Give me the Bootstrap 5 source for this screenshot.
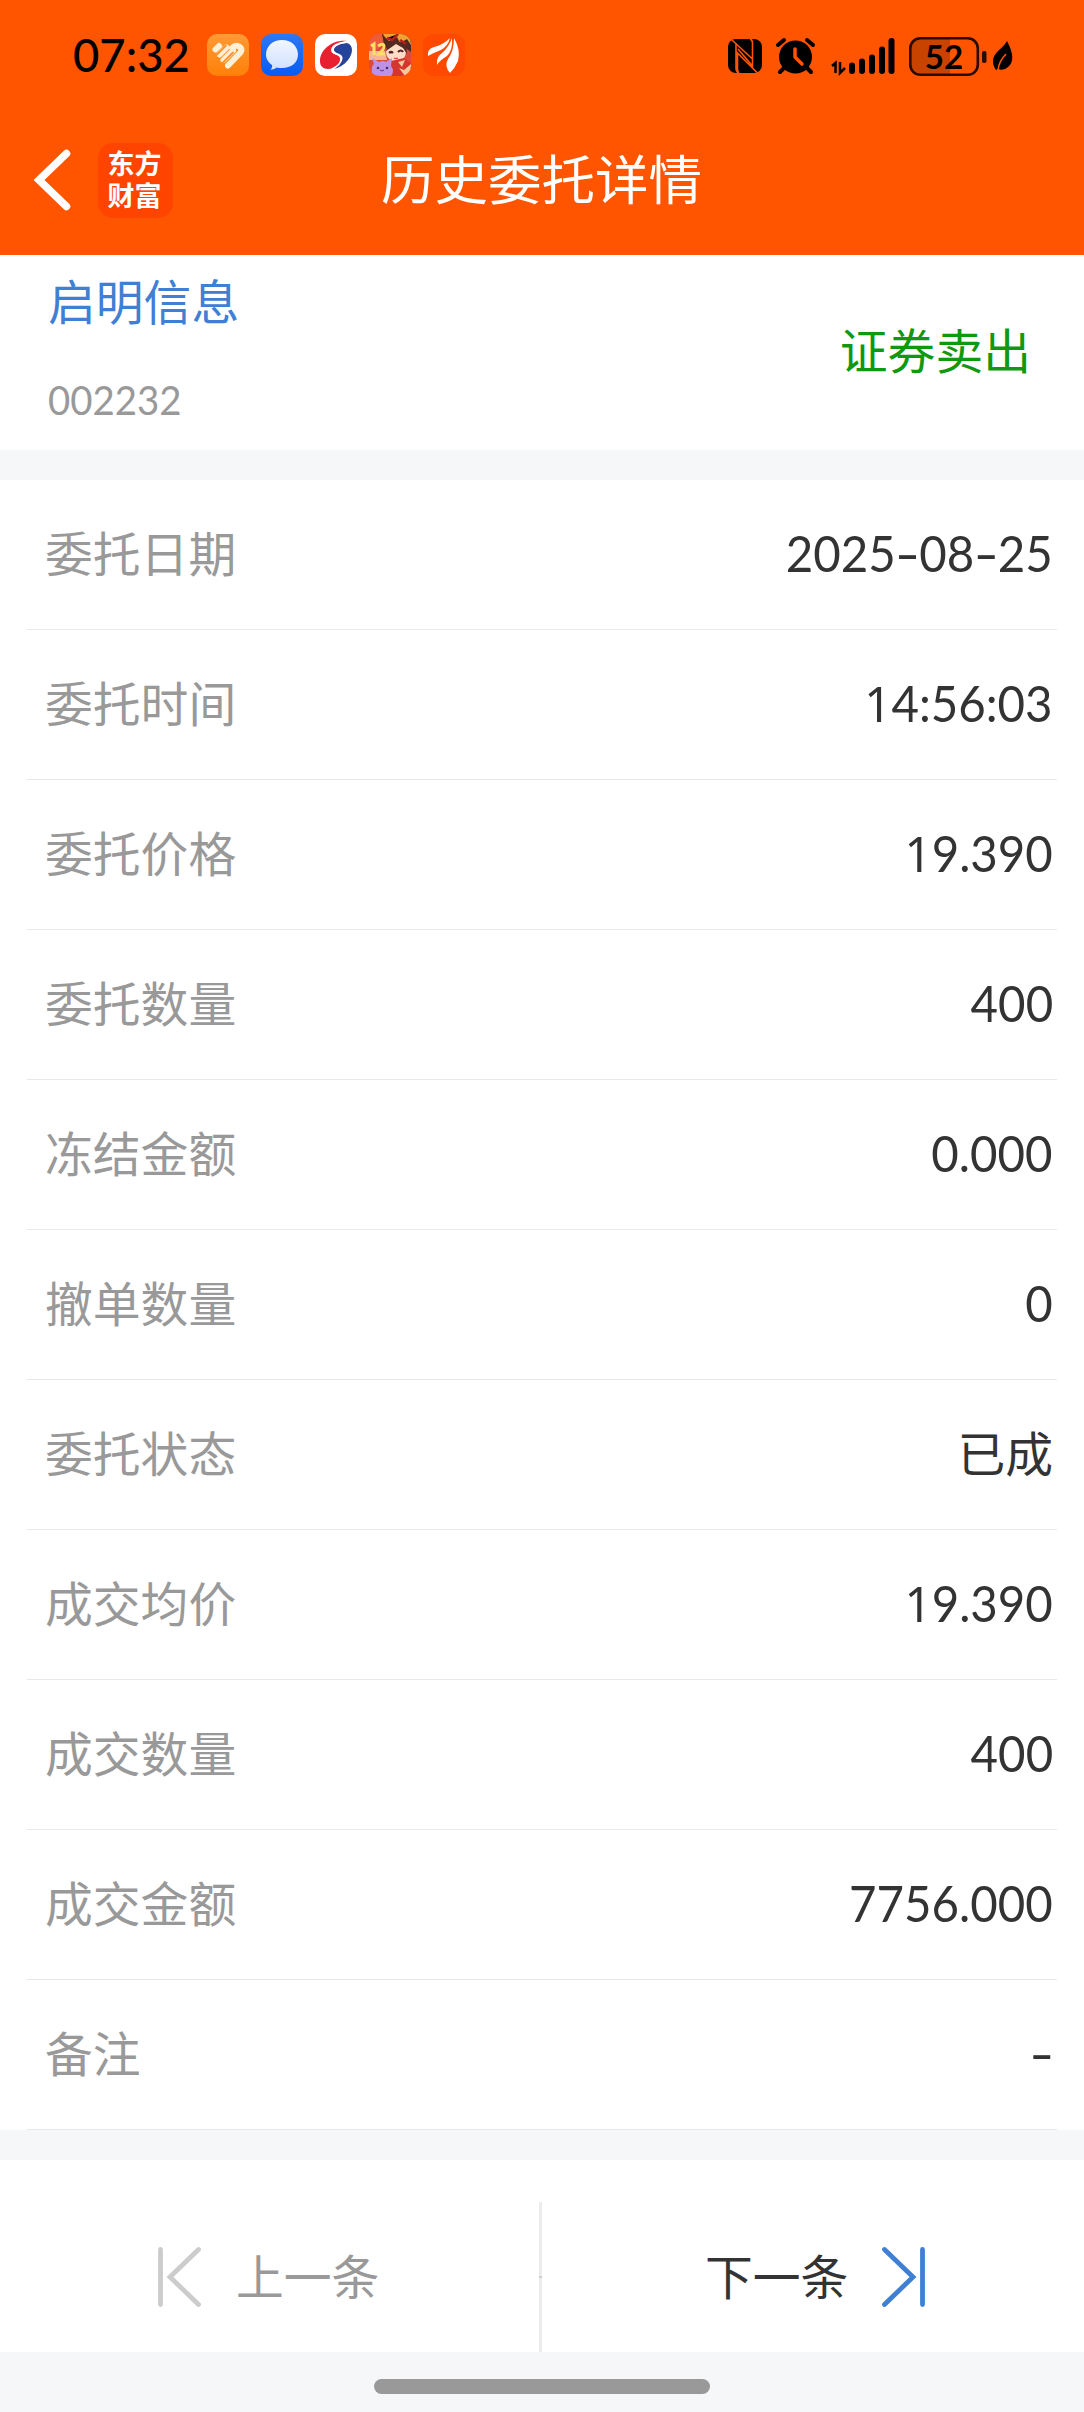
<!DOCTYPE html>
<html lang="zh-CN">
<head>
<meta charset="utf-8">
<meta name="viewport" content="width=device-width, initial-scale=1">
<title>历史委托详情</title>
<link href="https://cdn.jsdelivr.net/npm/bootstrap@5.3.0/dist/css/bootstrap.min.css" rel="stylesheet">
<style>
  body { width: 1084px; height: 2412px; background: #f6f7f9; font-family: "Noto Sans CJK SC", sans-serif; font-size: 47.8px; line-height: 1; color: #333; overflow: hidden; }
  svg { display: block; flex: none; overflow: visible; }
  .brand-bar { background: #ff5500; height: 255px; }
  .status-bar { height: 110px; padding: 0 72px 0 73px; color: #000; }
  .clock { font: 500 47px/1 Lato, sans-serif; width: 134px; transform: scaleX(.967); transform-origin: left; padding-bottom: 2px; }
  .app-icons { gap: 12px; }
  .title-bar { height: 145px; padding-bottom: 5px; }
  .title-side { width: 381px; padding-left: 35px; }
  .app-logo { width: 75px; height: 75px; border-radius: 15px; background: #ff4400; margin-left: 28px; font-size: 27px; font-weight: 700; line-height: 32.5px; color: #fff; padding: 4px 2px 0 0; }
  .page-title { font-size: 53.5px; color: #fff; font-weight: 400; line-height: 1; padding-bottom: 6px; }
  .stock-info { height: 195px; padding: 0 53px 0 48px; }
  .stock-name { color: #3f80d5; padding-top: 21px; }
  .stock-code { font: 40px/1 Lato, sans-serif; transform: scaleX(.96); transform-origin: left; color: #999; margin-top: 56px; }
  .side-sell { color: #0f990f; padding-bottom: 8px; }
  .gap-strip { height: 30px; }
  .detail-list { padding: 0 27px; }
  .detail-row { height: 150px; border-bottom: 1px solid #e9e9e9; padding: 0 4px 6px 18px; }
  .detail-label { color: #999; }
  .num { font-family: Lato, sans-serif; font-size: 49.5px; transform: scaleX(.958); transform-origin: right; padding-top: 4px; }
  .one { font-family: "Noto Sans", sans-serif; line-height: 1; }
  .dash { display: inline-block; width: 24.500px; text-align: center; transform: scaleX(1.45); }
  .pager { height: 192px; }
  .pager-cell { height: 192px; padding-top: 42px; }
  .pager-cell span { padding-bottom: 4px; }
  .pager-line { width: 3px; height: 150px; background: #ececec; margin-top: 42px; padding-top: 74px; }
  .pager-tick { height: 2px; background: #d0d0d0; }
  .home-zone { height: 60px; padding-top: 27px; }
  .home-pill { width: 336px; height: 15px; border-radius: 8px; background: #999; }
  .prev-cell { width: 539px; }
  .prev-icon { margin-left: 158px; margin-right: 35px; }
  .next-cell { width: 542px; }
  .next-text { margin-left: 163px; }
  .next-icon { margin-left: 34px; }
</style>
<script src="https://cdn.jsdelivr.net/npm/bootstrap@5.3.0/dist/js/bootstrap.bundle.min.js"></script>
</head>
<body>
<header class="brand-bar">
  <div class="status-bar d-flex align-items-center">
    <div class="clock">07:32</div>
    <div class="app-icons d-flex">
      <svg width="42" height="42" viewBox="0 0 42 42">
        <defs><linearGradient id="og" x1="0" y1="0" x2="0" y2="1"><stop offset="0" stop-color="#ff9a35"/><stop offset="1" stop-color="#ff8008"/></linearGradient></defs>
        <rect width="42" height="42" rx="10" fill="url(#og)"/>
        <path d="M8.500 15.500 12 12M12.500 20.500 19.500 13.500M16.500 26 26 16.500M21 31.500 33.500 18.500Q36 14.500 32 12.500 28.500 10.500 25.500 13.500" fill="none" stroke="#fff0d5" stroke-width="6" stroke-linecap="round" stroke-linejoin="round"/>
        <path d="M9.500 21 19 11.500M16 28.500 26 18.500" fill="none" stroke="#ff9126" stroke-width="1.800" stroke-linecap="round"/>
      </svg>
      <svg width="42" height="42" viewBox="0 0 42 42">
        <defs><linearGradient id="bg" x1="0" y1="0" x2="0" y2="1"><stop offset="0" stop-color="#2d78f5"/><stop offset="1" stop-color="#075bf5"/></linearGradient>
        <linearGradient id="bub" x1="0" y1="0" x2="0" y2="1"><stop offset="0" stop-color="#f2f7ff"/><stop offset="1" stop-color="#cfe0ff"/></linearGradient></defs>
        <rect width="42" height="42" rx="10" fill="url(#bg)"/>
        <path d="M21 6C30 6 37 12 37 20.500S30 34 21 34C19 34 17 34 15.500 33.500 14 35 12 35.500 9.500 35.500 11 34 11.500 32.500 11 31 7.500 28.500 5 25 5 20.500 5 12 12 6 21 6Z" fill="url(#bub)"/>
      </svg>
      <svg width="42" height="42" viewBox="0 0 42 42">
        <rect width="42" height="42" rx="10" fill="#fff"/>
        <path d="M32 7C20 5 5 14 5 27c0 8 7 9 13 7 7-2 10-9 6-12-3-2-8-2-7-6 1-5 9-8 15-9Z" fill="#e8202f"/>
        <path d="M32 9c7 2 6 11 1 17-4 5-9 8-15 9 7-4 11-9 9-13-2-3-9-3-8-7 1-3 7-6 13-6Z" fill="#26439b"/>
        <path d="M31 8C23 9 17 12 17 16c0 5 9 3 9 9 0 4-4 8-9 10" fill="none" stroke="#fff" stroke-width="1.800"/>
      </svg>
      <svg width="42" height="42" viewBox="0 0 42 42">
        <defs><clipPath id="game"><rect width="42" height="42" rx="10"/></clipPath></defs>
        <g clip-path="url(#game)">
          <rect width="42" height="42" fill="#df4938"/>
          <path d="M0 0H16L12 13 0 19Z" fill="#ed5b3d"/>
          <path d="M0 17H16L18 26H0Z" fill="#f6b596"/>
          <path d="M13 0H42V18L35 13 25 9 16 15Z" fill="#53291f"/>
          <path d="M15 2 20 7 28 3 31 9 38 5 42 11V0H14Z" fill="#efa432"/>
          <path d="M18 4 23 6 29 0M31 6 37 10" stroke="#b91d22" stroke-width="2.500"/>
          <ellipse cx="27" cy="18" rx="10" ry="9.500" fill="#ffdcc5"/>
          <path d="M17 17Q18 8 27 7 38 8 38 20L34 14 27 10Z" fill="#552a22"/>
          <path d="M20 19q2-2 4 0M29 18q3-3 5 0" stroke="#51212a" stroke-width="2.200" fill="none"/>
          <path d="M25 24q2 1 4 0" stroke="#d34242" stroke-width="1.200" fill="none"/>
          <path d="M22 27 35 24 42 29V42H20Z" fill="#d4362f"/>
          <path d="M29 28 36 26 33 33ZM30 34 35 36 42 30V39L36 42Z" fill="#f7c69b"/>
          <path d="M2 12 5 10V21M9 12Q15 8 15 13 15 15 10 20H16" fill="none" stroke="#ffdf62" stroke-width="3"/>
          <path d="M3 42Q2 31 5 30L3 24 10 28Q14 26 17 28L23 24 22 32Q26 37 22 42Z" fill="#bd91e6"/>
          <circle cx="9" cy="34" r="1.300" fill="#46306f"/><circle cx="18" cy="34" r="1.300" fill="#46306f"/>
          <path d="M11 36q2 2 4 0" fill="none" stroke="#583570"/>
        </g>
      </svg>
      <svg width="42" height="42" viewBox="0 0 42 42">
        <rect width="42" height="42" rx="10" fill="#ff4900"/>
        <path d="M5 22Q4 15 11 13 20 11 27 4 25 12 18 16 10 19 5 22Z" fill="#fff"/>
        <path d="M14 31Q13 23 19 19 26 13 29 4 30 16 24 22 17 26 14 31Z" fill="#fff"/>
        <path d="M27 39Q21 32 25 25 31 17 31 4 38 16 35 27 32 34 27 39Z" fill="#fff"/>
      </svg>
    </div>
    <svg class="ms-auto" width="284" height="42" viewBox="728 34 284 42">
      <rect x="728" y="39" width="34" height="34" rx="8" fill="#000"/>
      <path d="M733.500 39Q736 41 736 48V73M735 40 756 61M735.500 50 755 71M754.500 73Q753 70 753 63V39M743 49V65L738 60M746 47V63" fill="none" stroke="#ff5500" stroke-width="0"/>
      <path d="M732 40 752.500 59V43Q752.500 40 750 39M738 73Q736 71 736 69V43M739 73Q737.500 72 737.500 69V53L757.500 73M752.500 59V66L738 49" fill="none" stroke="#ff5500" stroke-width="1.600"/>
      <circle cx="795.500" cy="57" r="16.500" fill="#000"/>
      <path d="M778 45 784 40M807 40 813 45M784 68 780 72M807 68 811 72" stroke="#000" stroke-width="4" stroke-linecap="round"/>
      <path d="M795 49V57L802 64" fill="none" stroke="#ff5500" stroke-width="3.500" stroke-linecap="round" stroke-linejoin="round"/>
      <path d="M832 66 835.500 63V73M840 62V73L845 68" fill="none" stroke="#000" stroke-width="2.500"/>
      <g fill="#000"><rect x="849" y="62.500" width="6" height="11.500" rx="3"/><rect x="859" y="58.500" width="6" height="15.500" rx="3"/><rect x="869" y="54.500" width="6" height="19.500" rx="3"/><rect x="879" y="46.500" width="6" height="27.500" rx="3"/><rect x="888.500" y="38" width="6" height="36" rx="3"/></g>
      <path d="M950 39V74H920Q911 74 911 65V48Q911 39 920 39Z" fill="#c94300"/>
      <rect x="910.300" y="38.300" width="67.500" height="36.500" rx="10" fill="none" stroke="#280c00" stroke-width="2.600"/>
      <text x="944" y="69" text-anchor="middle" font-family="Lato, sans-serif" font-weight="700" font-size="33" fill="#000">52</text>
      <rect x="982" y="51" width="4.500" height="12" rx="2" fill="#280c00"/>
      <path d="M1007 41Q1017 60 1008 67 1004 71 998 69L996 70Q989 60 998 51 1005 45 1007 41Z" fill="#000"/>
      <path d="M998 70Q999 61 1006 54" fill="none" stroke="#ff5500" stroke-width="1.600"/>
    </svg>
  </div>
  <div class="title-bar d-flex align-items-center">
    <div class="title-side d-flex align-items-center">
      <svg width="35" height="60" viewBox="0 0 35 60"><path d="M31.500 3.500 4 30 31.500 56.500" fill="none" stroke="#fff" stroke-width="7.500" stroke-linecap="round"/></svg>
      <div class="app-logo text-center">东方<br>财富</div>
    </div>
    <h1 class="page-title m-0">历史委托详情</h1>
  </div>
</header>
<main>
  <section class="stock-info bg-white d-flex justify-content-between align-items-center">
    <div class="align-self-start">
      <div class="stock-name">启明信息</div>
      <div class="stock-code">002232</div>
    </div>
    <div class="side-sell">证券卖出</div>
  </section>
  <div class="gap-strip"></div>
  <section class="detail-list bg-white">
    <div class="detail-row d-flex justify-content-between align-items-center"><span class="detail-label">委托日期</span><span class="num">2025<span class="dash">-</span>08<span class="dash">-</span>25</span></div>
    <div class="detail-row d-flex justify-content-between align-items-center"><span class="detail-label">委托时间</span><span class="num"><span class="one">1</span>4:56:03</span></div>
    <div class="detail-row d-flex justify-content-between align-items-center"><span class="detail-label">委托价格</span><span class="num"><span class="one">1</span>9.390</span></div>
    <div class="detail-row d-flex justify-content-between align-items-center"><span class="detail-label">委托数量</span><span class="num">400</span></div>
    <div class="detail-row d-flex justify-content-between align-items-center"><span class="detail-label">冻结金额</span><span class="num">0.000</span></div>
    <div class="detail-row d-flex justify-content-between align-items-center"><span class="detail-label">撤单数量</span><span class="num">0</span></div>
    <div class="detail-row d-flex justify-content-between align-items-center"><span class="detail-label">委托状态</span><span>已成</span></div>
    <div class="detail-row d-flex justify-content-between align-items-center"><span class="detail-label">成交均价</span><span class="num"><span class="one">1</span>9.390</span></div>
    <div class="detail-row d-flex justify-content-between align-items-center"><span class="detail-label">成交数量</span><span class="num">400</span></div>
    <div class="detail-row d-flex justify-content-between align-items-center"><span class="detail-label">成交金额</span><span class="num">7756.000</span></div>
    <div class="detail-row d-flex justify-content-between align-items-center"><span class="detail-label">备注</span><span class="num"><span class="dash">-</span></span></div>
  </section>
  <div class="gap-strip"></div>
  <nav class="pager bg-white d-flex">
    <div class="pager-cell prev-cell d-flex align-items-center">
      <svg class="prev-icon" width="43" height="60" viewBox="0 0 43 60"><path d="M2.500 2.500V57.500M40.500 2.500 12 30 40.500 57.500" fill="none" stroke="#ccc" stroke-width="4.800" stroke-linecap="round"/></svg>
      <span class="detail-label">上一条</span>
    </div>
    <div class="pager-line flex-shrink-0"><div class="pager-tick"></div></div>
    <div class="pager-cell next-cell d-flex align-items-center">
      <span class="next-text">下一条</span>
      <svg class="next-icon" width="43" height="60" viewBox="0 0 43 60"><path d="M40.500 2.500V57.500M2.500 2.500 31 30 2.500 57.500" fill="none" stroke="#3f80d5" stroke-width="4.800" stroke-linecap="round"/></svg>
    </div>
  </nav>
</main>
<footer class="home-zone d-flex justify-content-center"><div class="home-pill"></div></footer>
</body>
</html>
